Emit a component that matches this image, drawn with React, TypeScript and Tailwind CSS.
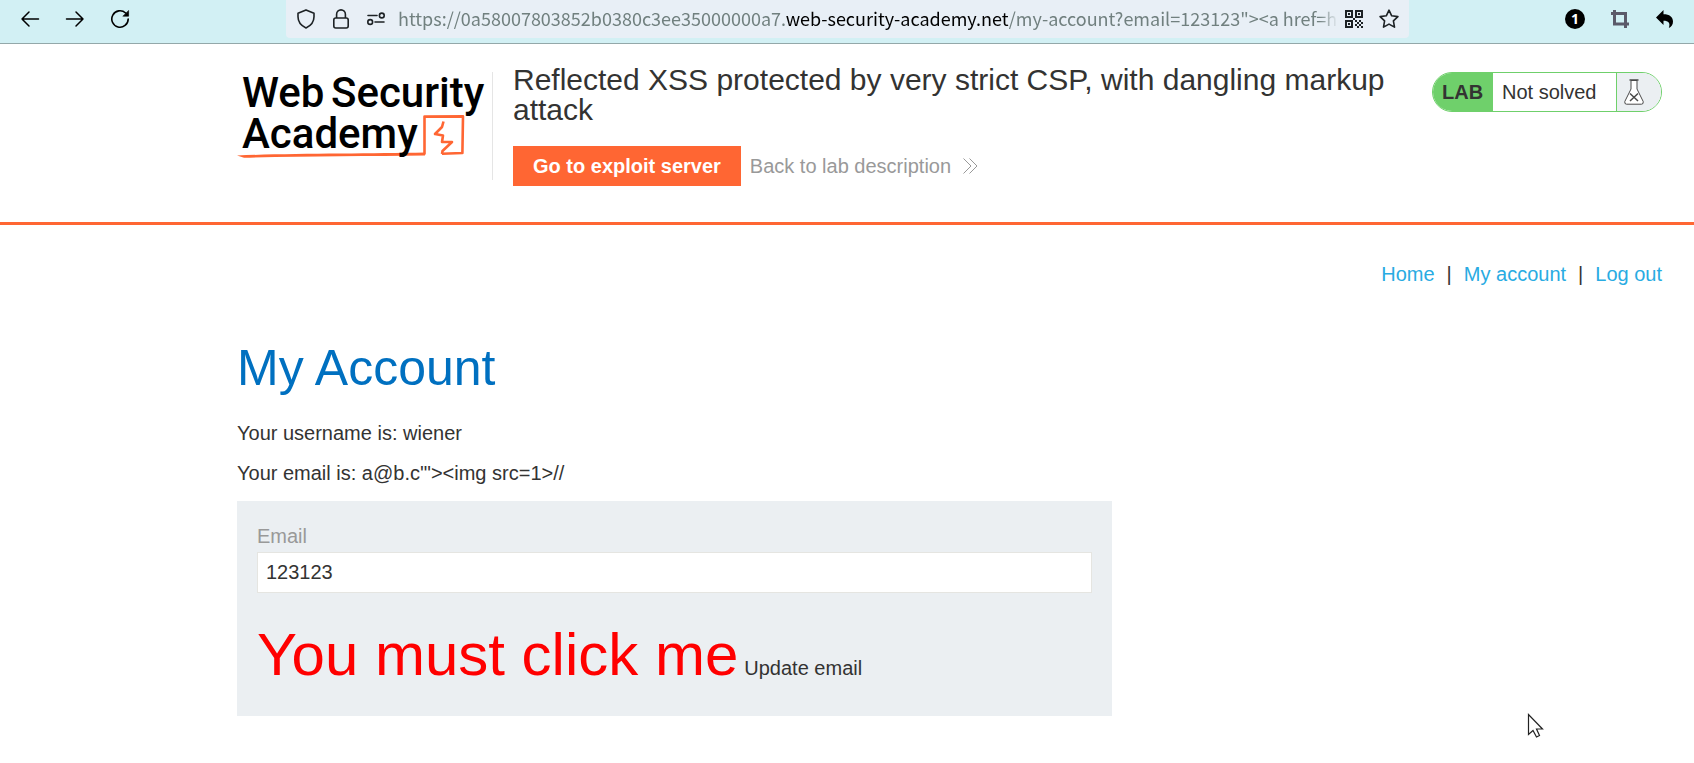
import type { ReactNode } from 'react';

function ToolButton({ label, children }: { label: string; children: ReactNode }) {
  return (
    <button type="button" aria-label={label} className="flex size-5 shrink-0 items-center justify-center">
      {children}
    </button>
  );
}

function BrowserBar() {
  return (
    <header className="flex h-11 items-start border-b border-[#93a8a9] bg-[#d2f0f4] text-black">
      <nav className="flex h-[38px] w-[286px] shrink-0 items-center gap-[25px] pl-5" aria-label="History">
        <ToolButton label="Back">
          <svg width="20" height="20" viewBox="0 0 20 20" fill="none" stroke="currentColor" strokeWidth="1.5" strokeLinecap="round" strokeLinejoin="round">
            <path d="M18.5 10H2M9 3L2 10l7 7" />
          </svg>
        </ToolButton>
        <ToolButton label="Forward">
          <svg width="20" height="20" viewBox="0 0 20 20" fill="none" stroke="currentColor" strokeWidth="1.5" strokeLinecap="round" strokeLinejoin="round">
            <path d="M1.5 10H18M11 3l7 7-7 7" />
          </svg>
        </ToolButton>
        <ToolButton label="Reload">
          <svg width="20" height="20" viewBox="0 0 20 20" fill="none" stroke="currentColor" strokeWidth="1.6" strokeLinecap="round">
            <path d="M18.2 10a8.2 8.2 0 1 1-2.6-6" />
            <path d="M18.6 1.8v5.4h-5.4z" fill="currentColor" strokeWidth="0.6" strokeLinejoin="round" />
          </svg>
        </ToolButton>
      </nav>
      <div className="flex h-[38px] min-w-0 flex-1 items-center rounded-b bg-[#e8eff6] px-[10px] text-[#1d2225]">
        <div className="flex shrink-0 items-center gap-[15px]">
          <ToolButton label="Tracking protection">
            <svg width="20" height="20" viewBox="0 0 20 20" fill="none" stroke="currentColor" strokeWidth="1.6" strokeLinejoin="round">
              <path d="M10 .9l8 3.3v3.6c0 5-3.3 9-8 11.2C5.3 16.8 2 12.8 2 7.8V4.2z" />
            </svg>
          </ToolButton>
          <ToolButton label="Connection security">
            <svg width="20" height="20" viewBox="0 0 20 20" fill="none" stroke="currentColor" strokeWidth="1.6">
              <rect x="2.8" y="9" width="14.4" height="10" rx="2" />
              <path d="M5.6 9V5.3a4.4 4.4 0 0 1 8.8 0V9" />
            </svg>
          </ToolButton>
          <ToolButton label="Site permissions">
            <svg width="20" height="20" viewBox="0 0 20 20" fill="none" stroke="currentColor" strokeWidth="1.6" strokeLinecap="round">
              <path d="M2 6.5h9M9 13h9" />
              <circle cx="15.8" cy="6.5" r="2.4" />
              <circle cx="4.2" cy="13" r="2.4" />
            </svg>
          </ToolButton>
        </div>
        <p className="ml-3 min-w-0 flex-1 overflow-hidden mask-r-from-[98%] pb-[2px] font-['Noto_Sans_CJK_SC','Noto_Sans',sans-serif] text-[18px] leading-[36px] whitespace-nowrap text-[#71807f]">
          https://0a58007803852b0380c3ee35000000a7.<span className="text-black">web-security-academy.net</span>
          {'/my-account?email=123123"><a href=h'}
        </p>
        <div className="ml-[6px] flex shrink-0 items-center gap-[15px]">
          <ToolButton label="QR code">
            <svg width="18" height="18" viewBox="0 0 18 18" fill="currentColor">
              <path fillRule="evenodd" d="M0 0h8v8H0zM2 2v4h4v-4zM10 0h8v8h-8zM12 2v4h4v-4zM0 10h8v8H0zM2 12v4h4v-4z" />
              <path d="M3 3h2v2H3zM13 3h2v2h-2zM3 13h2v2H3zM10 10h2v2h-2zM14 10h2v2h-2zM12 12h2v2h-2zM16 12h2v2h-2zM10 14h2v2h-2zM14 14h2v2h-2zM12 16h2v2h-2zM16 16h2v2h-2zM8 8h2v2H8z" />
            </svg>
          </ToolButton>
          <ToolButton label="Bookmark">
            <svg width="20" height="20" viewBox="0 0 20 20" fill="none" stroke="currentColor" strokeWidth="1.6" strokeLinejoin="round">
              <path d="M10 1.2l2.7 5.6 6.2.8-4.5 4.3 1.1 6.2-5.5-3-5.5 3 1.1-6.2L1.1 7.6l6.2-.8z" />
            </svg>
          </ToolButton>
        </div>
      </div>
      <div className="flex h-[38px] w-[285px] shrink-0 items-center justify-end gap-[25px] pr-[19px]">
        <button type="button" className="flex size-5 items-center justify-center rounded-full bg-black font-['Noto_Sans',sans-serif] text-[14px] leading-5 font-bold text-white">
          1
        </button>
        <ToolButton label="Crop">
          <svg width="20" height="20" viewBox="0 0 20 20" fill="none" stroke="#5b5a69" strokeWidth="3">
            <path d="M1 4.5h14.5V19M4.5 1v14H19" />
          </svg>
        </ToolButton>
        <ToolButton label="Undo">
          <svg width="20" height="20" viewBox="0 0 20 20" fill="currentColor">
            <path d="M8.5 1v4.2c6 0 9.500 2.600 9.500 7.300 0 3.200-1.600 5.300-4.200 6.500 1.800-4.800-.3-7.200-5.300-7.200V16L1 8.500z" />
          </svg>
        </ToolButton>
      </div>
    </header>
  );
}

function AcademyLogo() {
  return (
    <svg width="255" height="100" viewBox="237 66 255 100" className="block" role="img" aria-label="Web Security Academy">
      <g fill="none" stroke="#ff6633" strokeLinejoin="round">
        <path strokeWidth="2.6" d="M424.5 154.5V116.6L463 116.4L462.4 153L442 153.8" />
        <path strokeWidth="2.6" d="M443.5 121.5L442 127L435 134L443 135.5L442 142L452 142L442.5 151L442 154" />
        <path fill="#ff6633" stroke="none" d="M237 155.4C290 153.6 370 153.6 425 152.6V155.4C370 156.2 300 156 244 157.8z" />
      </g>
      <g fill="#000" className="font-['Roboto',sans-serif] text-[42px] font-medium">
        <text x="242" y="107">Web</text>
        <text x="331" y="107">Security</text>
        <text x="242" y="148">Academy</text>
      </g>
    </svg>
  );
}

function LabStatus() {
  return (
    <div className="flex h-10 w-[230px] shrink-0 overflow-hidden rounded-full border border-[#6fd06b] leading-[38px]">
      <strong className="w-[60px] bg-[#6fd06b] pl-[9px]">LAB</strong>
      <p className="flex-1 pl-[9px]">Not solved</p>
      <div className="flex w-[45px] items-center border-l border-[#6fd06b] bg-[#ebeff2] pl-[7px]">
        <svg width="20" height="26" viewBox="0 0 20 26" fill="none" stroke="#4a4a4a" aria-hidden="true">
          <path fill="#fff" d="M7 1.5V10L.8 22.5Q.3 25.2 2.5 25.2H17.5Q19.7 25.2 19.2 22.5L13 10V1.5z" />
          <path strokeWidth="1.5" d="M5.5 1h9M6 14.5l8 7.5M14 14.5l-8 7.5" />
        </svg>
      </div>
    </div>
  );
}

function LabHeader() {
  return (
    <section className="flex items-start border-b-[3px] border-[#ff6633] pt-[21px] pr-8 pb-9 pl-[237px]">
      <a href="#academy" className="mt-px w-[255px] shrink-0">
        <AcademyLogo />
      </a>
      <div className="mt-[7px] h-[108px] w-px shrink-0 bg-[#e5e5e5]" />
      <div className="flex min-w-0 flex-1 flex-col items-start gap-[21px] pl-5">
        <h2 className="max-w-[890px] text-[30px] leading-[30px]">
          Reflected XSS protected by very strict CSP, with dangling markup attack
        </h2>
        <div className="flex items-center">
          <a href="#exploit-server" className="bg-[#ff6633] px-5 leading-10 font-bold text-white">
            Go to exploit server
          </a>
          <a href="#description" className="flex items-center gap-3 pl-[9px] text-[#999999]">
            Back to lab description
            <svg width="15" height="16" viewBox="0 0 15 16" fill="none" stroke="currentColor" aria-hidden="true">
              <path d="M.5 .5L8 8L.5 15.5M6.5 .5L14 8L6.5 15.5" />
            </svg>
          </a>
        </div>
      </div>
      <div className="mt-[7px]">
        <LabStatus />
      </div>
    </section>
  );
}

export default function App() {
  return (
    <div className="relative min-h-screen bg-white font-['Liberation_Sans',Arial,sans-serif] text-[20px] leading-[30px] text-[#333332]">
      <BrowserBar />
      <LabHeader />
      <main className="pt-[34px] pr-8 pl-[237px]">
        <nav className="flex justify-end gap-3 text-[#29abe2]" aria-label="Account">
          <a href="#home">Home</a>
          <span className="text-[#333332]">|</span>
          <a href="#account">My account</a>
          <span className="text-[#333332]">|</span>
          <a href="#logout">Log out</a>
        </nav>
        <h1 className="mt-[50px] text-[50px] leading-[58px] text-[#0070c0]">My Account</h1>
        <div className="mt-[21px] flex flex-col gap-[10px]">
          <p>Your username is: wiener</p>
          <p>{`Your email is: a@b.c'"><img src=1>//`}</p>
        </div>
        <form className="mt-[13px] max-w-[875px] bg-[#ebeff2] px-5 pt-5 pb-[26px]" onSubmit={(e) => e.preventDefault()}>
          <label htmlFor="email" className="block text-[#999999]">
            Email
          </label>
          <input
            id="email"
            type="text"
            defaultValue="123123"
            className="mt-px block h-[41px] w-full border border-[#e5e5e1] bg-white px-2 outline-none"
          />
          <div className="mt-[27px] flex items-baseline gap-[6px]">
            <a href="#update" className="text-[60px] leading-[70px] text-[#ff0000]">
              You must click me
            </a>
            <button type="submit">Update email</button>
          </div>
        </form>
      </main>
      <svg className="absolute top-[713px] left-[1527px]" width="18" height="26" viewBox="0 0 18 26" aria-hidden="true">
        <path d="M1.5 1.5V21.5L6 17.5L9.5 24L12.5 22.5L9.5 16H15.5z" fill="#fff" stroke="#222" strokeWidth="1.2" />
      </svg>
    </div>
  );
}
